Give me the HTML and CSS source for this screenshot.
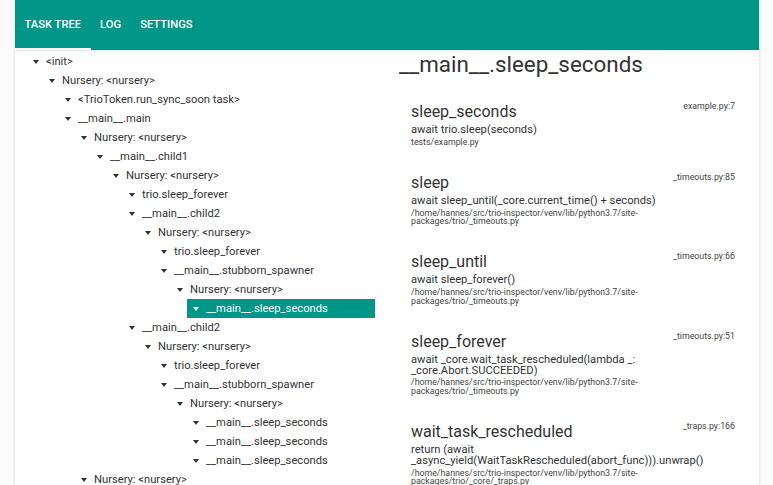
FILE: index.html
```html
<!DOCTYPE html>
<html lang="en">
<head>
<meta charset="utf-8">
<title>Trio Inspector</title>
<link rel="stylesheet" href="styles.css">
</head>
<body>
<div class="app">
  <header class="tabbar">
    <div class="tab active">Task Tree</div>
    <div class="tab">Log</div>
    <div class="tab">Settings</div>
  </header>
  <main class="content">
    <nav class="tree">
      <ul class="level">
        <li><div class="node"><svg class="caret" viewBox="0 0 6 4"><polygon points="0,0 6,0 3,4"/></svg><span>&lt;init&gt;</span></div>
          <ul class="level">
            <li><div class="node"><svg class="caret" viewBox="0 0 6 4"><polygon points="0,0 6,0 3,4"/></svg><span>Nursery: &lt;nursery&gt;</span></div>
              <ul class="level">
                <li><div class="node"><svg class="caret" viewBox="0 0 6 4"><polygon points="0,0 6,0 3,4"/></svg><span>&lt;TrioToken.run_sync_soon task&gt;</span></div></li>
                <li><div class="node"><svg class="caret" viewBox="0 0 6 4"><polygon points="0,0 6,0 3,4"/></svg><span>__main__.main</span></div>
                  <ul class="level">
                    <li><div class="node"><svg class="caret" viewBox="0 0 6 4"><polygon points="0,0 6,0 3,4"/></svg><span>Nursery: &lt;nursery&gt;</span></div>
                      <ul class="level">
                        <li><div class="node"><svg class="caret" viewBox="0 0 6 4"><polygon points="0,0 6,0 3,4"/></svg><span>__main__.child1</span></div>
                          <ul class="level">
                            <li><div class="node"><svg class="caret" viewBox="0 0 6 4"><polygon points="0,0 6,0 3,4"/></svg><span>Nursery: &lt;nursery&gt;</span></div>
                              <ul class="level">
                                <li><div class="node"><svg class="caret" viewBox="0 0 6 4"><polygon points="0,0 6,0 3,4"/></svg><span>trio.sleep_forever</span></div></li>
                                <li><div class="node"><svg class="caret" viewBox="0 0 6 4"><polygon points="0,0 6,0 3,4"/></svg><span>__main__.child2</span></div>
                                  <ul class="level">
                                    <li><div class="node"><svg class="caret" viewBox="0 0 6 4"><polygon points="0,0 6,0 3,4"/></svg><span>Nursery: &lt;nursery&gt;</span></div>
                                      <ul class="level">
                                        <li><div class="node"><svg class="caret" viewBox="0 0 6 4"><polygon points="0,0 6,0 3,4"/></svg><span>trio.sleep_forever</span></div></li>
                                        <li><div class="node"><svg class="caret" viewBox="0 0 6 4"><polygon points="0,0 6,0 3,4"/></svg><span>__main__.stubborn_spawner</span></div>
                                          <ul class="level">
                                            <li><div class="node"><svg class="caret" viewBox="0 0 6 4"><polygon points="0,0 6,0 3,4"/></svg><span>Nursery: &lt;nursery&gt;</span></div>
                                              <ul class="level">
                                                <li><div class="node selected"><svg class="caret" viewBox="0 0 6 4"><polygon points="0,0 6,0 3,4"/></svg><span>__main__.sleep_seconds</span></div></li>
                                              </ul>
                                            </li>
                                          </ul>
                                        </li>
                                      </ul>
                                    </li>
                                  </ul>
                                </li>
                                <li><div class="node"><svg class="caret" viewBox="0 0 6 4"><polygon points="0,0 6,0 3,4"/></svg><span>__main__.child2</span></div>
                                  <ul class="level">
                                    <li><div class="node"><svg class="caret" viewBox="0 0 6 4"><polygon points="0,0 6,0 3,4"/></svg><span>Nursery: &lt;nursery&gt;</span></div>
                                      <ul class="level">
                                        <li><div class="node"><svg class="caret" viewBox="0 0 6 4"><polygon points="0,0 6,0 3,4"/></svg><span>trio.sleep_forever</span></div></li>
                                        <li><div class="node"><svg class="caret" viewBox="0 0 6 4"><polygon points="0,0 6,0 3,4"/></svg><span>__main__.stubborn_spawner</span></div>
                                          <ul class="level">
                                            <li><div class="node"><svg class="caret" viewBox="0 0 6 4"><polygon points="0,0 6,0 3,4"/></svg><span>Nursery: &lt;nursery&gt;</span></div>
                                              <ul class="level">
                                                <li><div class="node"><svg class="caret" viewBox="0 0 6 4"><polygon points="0,0 6,0 3,4"/></svg><span>__main__.sleep_seconds</span></div></li>
                                                <li><div class="node"><svg class="caret" viewBox="0 0 6 4"><polygon points="0,0 6,0 3,4"/></svg><span>__main__.sleep_seconds</span></div></li>
                                                <li><div class="node"><svg class="caret" viewBox="0 0 6 4"><polygon points="0,0 6,0 3,4"/></svg><span>__main__.sleep_seconds</span></div></li>
                                              </ul>
                                            </li>
                                          </ul>
                                        </li>
                                      </ul>
                                    </li>
                                  </ul>
                                </li>
                              </ul>
                            </li>
                          </ul>
                        </li>
                      </ul>
                    </li>
                    <li><div class="node"><svg class="caret" viewBox="0 0 6 4"><polygon points="0,0 6,0 3,4"/></svg><span>Nursery: &lt;nursery&gt;</span></div></li>
                  </ul>
                </li>
              </ul>
            </li>
          </ul>
        </li>
      </ul>
    </nav>
    <section class="detail">
      <h1 class="title">__main__.sleep_seconds</h1>
      <div class="frame">
        <div class="frame-name">sleep_seconds</div>
        <div class="frame-file">example.py:7</div>
        <div class="frame-code">await trio.sleep(seconds)</div>
        <div class="frame-path">tests/example.py</div>
      </div>
      <div class="frame">
        <div class="frame-name">sleep</div>
        <div class="frame-file">_timeouts.py:85</div>
        <div class="frame-code">await sleep_until(_core.current_time() + seconds)</div>
        <div class="frame-path">/home/hannes/src/trio-inspector/venv/lib/python3.7/site-packages/trio/_timeouts.py</div>
      </div>
      <div class="frame">
        <div class="frame-name">sleep_until</div>
        <div class="frame-file">_timeouts.py:66</div>
        <div class="frame-code">await sleep_forever()</div>
        <div class="frame-path">/home/hannes/src/trio-inspector/venv/lib/python3.7/site-packages/trio/_timeouts.py</div>
      </div>
      <div class="frame">
        <div class="frame-name">sleep_forever</div>
        <div class="frame-file">_timeouts.py:51</div>
        <div class="frame-code">await _core.wait_task_rescheduled(lambda _: _core.Abort.SUCCEEDED)</div>
        <div class="frame-path">/home/hannes/src/trio-inspector/venv/lib/python3.7/site-packages/trio/_timeouts.py</div>
      </div>
      <div class="frame">
        <div class="frame-name">wait_task_rescheduled</div>
        <div class="frame-file">_traps.py:166</div>
        <div class="frame-code">return (await _async_yield(WaitTaskRescheduled(abort_func))).unwrap()</div>
        <div class="frame-path">/home/hannes/src/trio-inspector/venv/lib/python3.7/site-packages/trio/_core/_traps.py</div>
      </div>
    </section>
  </main>
</div>
</body>
</html>
```

FILE: styles.css
```css
html, body {
  margin: 0;
  padding: 0;
}

body {
  background: #fafafa;
  font-family: Roboto, "Liberation Sans", Arial, sans-serif;
  color: #333;
}

.app {
  margin: 0 14px 0 15px;
  min-height: 100vh;
  background: #fff;
  box-shadow: 0 0 2px rgba(0, 0, 0, 0.18);
}

.tabbar {
  display: flex;
  height: 50px;
  background: #009688;
  box-shadow: 0 1px 1px rgba(0, 0, 0, 0.08);
}

.tab {
  display: flex;
  align-items: center;
  box-sizing: border-box;
  height: 50px;
  padding: 0 9.5px;
  color: #fff;
  font-size: 11.2px;
  font-weight: 500;
  text-transform: uppercase;
  border-bottom: 2px solid transparent;
}

.tab.active {
  border-bottom-color: #fff;
}

.content {
  display: grid;
  grid-template-columns: 360px 1fr;
}

.tree {
  padding: 2px 0 0 12px;
  font-size: 11.2px;
}

.level {
  list-style: none;
  margin: 0;
  padding: 0;
}

.level .level {
  padding-left: 16px;
}

.node {
  display: flex;
  align-items: center;
  height: 19px;
  line-height: 19px;
  padding-left: 6px;
  white-space: nowrap;
  color: #333;
}

.caret {
  width: 6px;
  height: 4px;
  margin-right: 7px;
  fill: #333;
  flex: none;
}

.node.selected {
  background: #009688;
  color: #fff;
}

.node.selected .caret {
  fill: #fff;
}

.detail {
  padding: 1px 24px 0;
}

.title {
  margin: 0 0 24px;
  font-size: 22.4px;
  line-height: 27px;
  font-weight: 400;
  color: #333;
}

.frame {
  display: grid;
  grid-template-columns: 1fr auto;
  padding-left: 12px;
  margin-bottom: 26.8px;
}

.frame-name {
  font-size: 16px;
  line-height: 20px;
  margin-bottom: 3px;
  color: #333;
}

.frame-file {
  font-size: 8.8px;
  line-height: 8.8px;
  color: #444;
  align-self: start;
}

.frame-code {
  grid-column: 1 / -1;
  font-size: 11.2px;
  line-height: 10.8px;
  color: #333;
}

.frame-path {
  grid-column: 1 / -1;
  margin-top: 2px;
  font-size: 8.8px;
  line-height: 8.4px;
  color: #444;
}
```
